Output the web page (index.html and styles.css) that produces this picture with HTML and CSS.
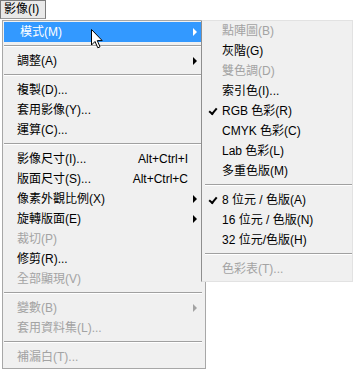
FILE: index.html
```html
<!DOCTYPE html>
<html>

<head>
  <title>影像選單</title>
  <link rel="stylesheet" href="styles.css">
</head>

<body>
  <div class="menubar">
    <span class="menu-title">影像(I)</span>
  </div>

  <div class="menus">
    <ul class="menu main-menu">
      <li class="item active has-sub">模式(M)</li>
      <li class="sep"></li>
      <li class="item has-sub">調整(A)</li>
      <li class="sep"></li>
      <li class="item">複製(D)...</li>
      <li class="item">套用影像(Y)...</li>
      <li class="item">運算(C)...</li>
      <li class="sep"></li>
      <li class="item">影像尺寸(I)...<span class="key">Alt+Ctrl+I</span></li>
      <li class="item">版面尺寸(S)...<span class="key">Alt+Ctrl+C</span></li>
      <li class="item has-sub">像素外觀比例(X)</li>
      <li class="item has-sub">旋轉版面(E)</li>
      <li class="item off">裁切(P)</li>
      <li class="item">修剪(R)...</li>
      <li class="item off">全部顯現(V)</li>
      <li class="sep"></li>
      <li class="item off has-sub">變數(B)</li>
      <li class="item off">套用資料集(L)...</li>
      <li class="sep"></li>
      <li class="item off">補漏白(T)...</li>
    </ul>

    <ul class="menu sub-menu">
      <li class="item off">點陣圖(B)</li>
      <li class="item">灰階(G)</li>
      <li class="item off">雙色調(D)</li>
      <li class="item">索引色(I)...</li>
      <li class="item checked">RGB 色彩(R)</li>
      <li class="item">CMYK 色彩(C)</li>
      <li class="item">Lab 色彩(L)</li>
      <li class="item">多重色版(M)</li>
      <li class="sep"></li>
      <li class="item checked">8 位元 / 色版(A)</li>
      <li class="item">16 位元 / 色版(N)</li>
      <li class="item">32 位元/色版(H)</li>
      <li class="sep"></li>
      <li class="item off">色彩表(T)...</li>
    </ul>

    <!-- mouse pointer -->
    <svg class="pointer" width="13" height="20" viewBox="0 0 13 20">
      <path d="M0.5 0.5 L0.5 16 L4 12.5 L6.8 18.8 L9 17.8 L6.3 11.6 L11.2 11.6 Z" fill="#fff" stroke="#000" stroke-width="1" stroke-linejoin="round"/>
    </svg>
  </div>
</body>

</html>
```

FILE: styles.css
```css
body {
  margin: 0;
  background: #ffffff;
  font-family: "Liberation Sans", "Noto Sans CJK TC", sans-serif;
  font-size: 12px;
  color: #000000;
}

.menubar {
  display: flex;
  height: 20px;
}

.menu-title {
  box-sizing: border-box;
  width: 46px;
  height: 19px;
  line-height: 17px;
  padding-left: 3px;
  background: #e9e9e9;
  border: 1px solid #7c7c7c;
  border-bottom-color: #9a9a9a;
}

.menus {
  display: flex;
  align-items: flex-start;
  position: relative;
}

.menu {
  list-style: none;
  margin: 0;
  background: #f0f0f0;
  box-sizing: border-box;
}

.main-menu {
  margin-left: 2px;
  width: 204px;
  padding: 1px 3px 1px 1px;
  border: 1px solid #a7a7a7;
}

.sub-menu {
  margin-left: -5px;
  width: 152px;
  padding: 0 0 2px 0;
  border: 1px solid #e2e2e2;
  border-left-color: #8e8e8e;
  position: relative;
  z-index: 2;
}

.item {
  position: relative;
  height: 20px;
  line-height: 20px;
  padding-left: 13px;
  white-space: nowrap;
}

.sub-menu .item {
  padding-left: 20px;
}

.item.off {
  color: #a3a3a3;
}

.item.active {
  background: #3399ff;
  color: #ffffff;
  padding-left: 16px;
}

.key {
  position: absolute;
  right: 14px;
  top: 0;
}

.has-sub::after {
  content: "";
  position: absolute;
  right: 5px;
  top: 6px;
  border-left: 4px solid #000000;
  border-top: 4px solid transparent;
  border-bottom: 4px solid transparent;
}

.has-sub.off::after {
  border-left-color: #a3a3a3;
}

.has-sub.active::after {
  border-left-color: #ffffff;
}

.checked::before {
  content: "";
  position: absolute;
  left: 7px;
  top: 7px;
  width: 6px;
  height: 3px;
  border-left: 2px solid #000000;
  border-bottom: 2px solid #000000;
  transform: rotate(-50deg);
}

.sep {
  height: 9px;
  box-sizing: border-box;
  padding-top: 3px;
}

.sep::before {
  content: "";
  display: block;
  height: 1px;
  background: #a0a0a0;
  border-bottom: 1px solid #ffffff;
}

.sub-menu .sep {
  margin-left: 3px;
}

.pointer {
  position: absolute;
  left: 91px;
  top: 9px;
  z-index: 3;
}
```
